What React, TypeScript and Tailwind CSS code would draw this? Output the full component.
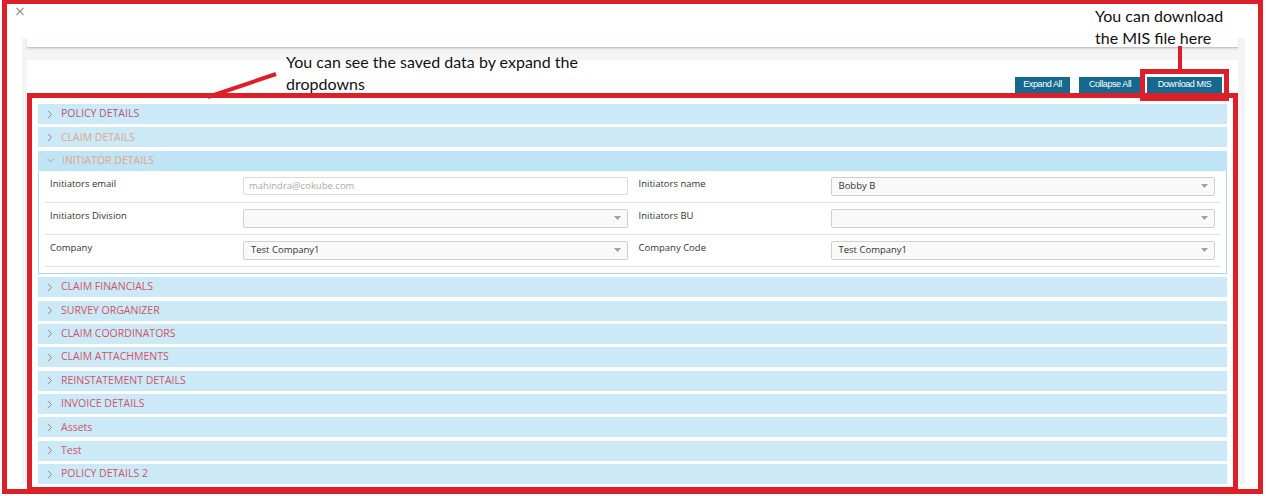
import React from 'react'

type Section = { name: string; color: string; open?: boolean }

const sections: Section[] = [
    { name: 'POLICY DETAILS', color: 'text-[#b9557a]' },
    { name: 'CLAIM DETAILS', color: 'text-[#dfa888]' },
    { name: 'INITIATOR DETAILS', color: 'text-[#e5a77c]', open: true },
    { name: 'CLAIM FINANCIALS', color: 'text-[#cd5568]' },
    { name: 'SURVEY ORGANIZER', color: 'text-[#cd5568]' },
    { name: 'CLAIM COORDINATORS', color: 'text-[#cd5568]' },
    { name: 'CLAIM ATTACHMENTS', color: 'text-[#cd5568]' },
    { name: 'REINSTATEMENT DETAILS', color: 'text-[#cd5568]' },
    { name: 'INVOICE DETAILS', color: 'text-[#cd5568]' },
    { name: 'Assets', color: 'text-[#cd5568]' },
    { name: 'Test', color: 'text-[#cd5568]' },
    { name: 'POLICY DETAILS 2', color: 'text-[#cd5568]' },
]

const formRows = [
    [
        { label: 'Initiators email', value: 'mahindra@cokube.com', kind: 'input' },
        { label: 'Initiators name', value: 'Bobby B', kind: 'select' },
    ],
    [
        { label: 'Initiators Division', value: '', kind: 'select' },
        { label: 'Initiators BU', value: '', kind: 'select' },
    ],
    [
        { label: 'Company', value: 'Test Company1', kind: 'select' },
        { label: 'Company Code', value: 'Test Company1', kind: 'select' },
    ],
]

const Field: React.FC<{ value: string; kind: string }> = ({ value, kind }) =>
    kind === 'input' ? (
        <div className="flex h-[18px] flex-1 items-center rounded-[2px] border border-[#dcdcdc] bg-white px-[5px] text-[9.5px] text-[#a9a9a9]">
            {value}
        </div>
    ) : (
        <div className="flex h-[19px] flex-1 items-center rounded-[2px] border border-[#cfcfcf] bg-[#f9f9f9] pl-[7px] pr-[6px] text-[9.5px] text-[#333]">
            <span className="flex-1">{value}</span>
            <svg width="7" height="4" viewBox="0 0 7 4">
                <path d="M0 0h7L3.5 4z" fill="#a0a0a0" />
            </svg>
        </div>
    )

const AccordionHeader: React.FC<{ section: Section }> = ({ section }) => (
    <div
        className={`flex h-[20px] items-center pl-[9px] ${
            section.open ? 'bg-[#bfe4f6]' : 'bg-[#cce9f7]'
        }`}
    >
        {section.open ? (
            <svg width="7" height="5" viewBox="0 0 7 5">
                <path d="M0.5 0.8l3 3 3-3" stroke="#9aa7ae" fill="none" strokeWidth="1" />
            </svg>
        ) : (
            <svg width="6" height="9" viewBox="0 0 6 9">
                <path d="M1 0.8l3.4 3.7L1 8.2" stroke="#8c8c8c" fill="none" strokeWidth="1" />
            </svg>
        )}
        <span className={`ml-[8px] text-[10.5px] ${section.color}`}>{section.name}</span>
    </div>
)

const App: React.FC = () => {
    return (
        <div className="relative h-[496px] w-[1266px] overflow-hidden bg-white font-['Segoe_UI','Open_Sans',sans-serif]">
            <div className="h-[38px] pl-[14px] pt-[2px] font-['DejaVu_Sans',sans-serif] text-[14px] leading-[18px] text-[#8f8f8f]">×</div>

            <div className="ml-[22px] w-[1223px] bg-[#f4f4f4] pl-[5px] pr-[7px]">
                <div className="h-[10px] border-b border-[#c6c6c6] bg-white shadow-[0_1px_2px_rgba(0,0,0,0.12)]" />

                <div className="mt-[12px] bg-white px-[11px] pt-[17px]">
                    <div className="mb-[11px] flex justify-end pr-[5px] font-['Liberation_Sans',Arial,sans-serif] text-[9px] tracking-[-0.4px] text-white">
                        <button className="h-[16px] w-[55px] bg-[#15698f]">Expand All</button>
                        <button className="ml-[9px] h-[16px] w-[62px] bg-[#15698f]">Collapse All</button>
                        <button className="ml-[6px] h-[16px] w-[75px] bg-[#15698f]">Download MIS</button>
                    </div>

                    <div className="flex flex-col gap-[3.375px]">
                        {sections.map((section) => (
                            <div key={section.name}>
                                <AccordionHeader section={section} />
                                {section.open && (
                                    <div className="border border-t-0 border-[#a9d9ef] px-[6px] pb-[6px]">
                                        {formRows.map((row, i) => (
                                            <div key={i} className="flex border-b border-[#dedede] pt-[6px] pb-[6px]">
                                                {row.map((f, j) => (
                                                    <div key={f.label} className="flex flex-1 items-start pr-[5px]">
                                                        <div
                                                            className={`w-[198px] pt-[1px] text-[9.5px] leading-[12px] text-[#333] ${
                                                                j === 0 ? 'pl-[5px]' : 'pl-[6px]'
                                                            }`}
                                                        >
                                                            {f.label}
                                                        </div>
                                                        <Field value={f.value} kind={f.kind} />
                                                    </div>
                                                ))}
                                            </div>
                                        ))}
                                    </div>
                                )}
                            </div>
                        ))}
                    </div>
                </div>
            </div>

            {/* annotations */}
            <div className="pointer-events-none absolute left-[2px] top-[-1px] h-[495px] w-[1261px] border-[5px] border-[#dc1f28]" />
            <div className="pointer-events-none absolute left-[27px] top-[93px] h-[399px] w-[1211px] border-[5px] border-[#dc1f28]" />
            <div className="pointer-events-none absolute left-[1140px] top-[69px] h-[32px] w-[89px] border-[5px] border-[#dc1f28]" />
            <svg className="pointer-events-none absolute left-0 top-0" width="1266" height="496">
                <line x1="208" y1="97" x2="276" y2="74" stroke="#dc1f28" strokeWidth="4" />
                <line x1="1180" y1="46" x2="1180" y2="70" stroke="#dc1f28" strokeWidth="4" />
            </svg>
            <div className="pointer-events-none absolute left-[286px] top-[51px] font-['Lato',sans-serif] text-[16px] leading-[22px] text-[#111]">
                You can see the saved data by expand the
                <br />
                dropdowns
            </div>
            <div className="pointer-events-none absolute left-[1095px] top-[5px] font-['Lato',sans-serif] text-[16px] leading-[22px] text-[#111]">
                You can download
                <br />
                the MIS file here
            </div>
        </div>
    )
}

export default App
